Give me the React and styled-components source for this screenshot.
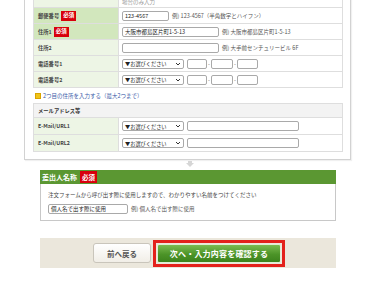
import styled, { createGlobalStyle } from "styled-components";

const Global = createGlobalStyle`
  body {
    margin: 0;
    background: #fff;
    font-family: "Noto Sans CJK JP", "Liberation Sans", sans-serif;
    color: #333;
  }
`

const Page = styled.div`
  width: 380px;
  height: 300px;
  overflow: hidden;
`

const Panel = styled.div`
  margin: -9px 0 0 24px;
  width: 310px;
  padding: 0 7px 7px 8px;
  border: 1px solid #d2d2d2;
  border-top: none;
  box-shadow: 1px 1px 1px rgba(0,0,0,0.06);
`

const Table = styled.div`
  border: 1px solid #dedede;
  border-top: ${(p) => (p.$open ? "none" : "1px solid #dedede")};
  margin-top: ${(p) => p.$gap || 0}px;
`

const Row = styled.div`
  display: flex;
  height: ${(p) => p.$h || 15}px;
  border-bottom: 1px solid #dedede;
  &:last-child { border-bottom: none; }
`

const Label = styled.div`
  width: 85px;
  flex: none;
  display: flex;
  align-items: center;
  gap: 2px;
  padding-left: 4px;
  box-sizing: border-box;
  border-right: 1px solid #dedede;
  background: ${(p) => (p.$req ? "#d2e7bd" : "#edf5e5")};
  font-size: 5.3px;
  font-weight: bold;
  color: #444;
`

const Cell = styled.div`
  flex: 1;
  display: flex;
  align-items: ${(p) => (p.$bottom ? "flex-end" : "center")};
  padding-left: 3px;
  padding-bottom: ${(p) => (p.$bottom ? 2 : 0)}px;
  gap: 3px;
  font-size: 5.5px;
  line-height: ${(p) => (p.$bottom ? "6px" : "normal")};
  color: ${(p) => (p.$muted ? "#999" : "#444")};
`

const Badge = styled.span`
  display: inline-flex;
  align-items: center;
  justify-content: center;
  background: #d8000c;
  color: #fff;
  font-size: ${(p) => p.$size || 5.5}px;
  font-weight: bold;
  height: ${(p) => p.$h || 10}px;
  padding: 0 2px;
  line-height: 1;
`

const Input = styled.div`
  width: ${(p) => p.$w}px;
  height: 8px;
  border: 1px solid #a9a9a9;
  border-radius: 2px;
  background: #fff;
  box-sizing: content-box;
  font-size: 5.5px;
  line-height: 8px;
  padding-left: 2px;
  color: #222;
  white-space: nowrap;
  overflow: hidden;
`

const Select = styled.div`
  width: 56px;
  height: 8px;
  border: 1px solid #a9a9a9;
  border-radius: 2px;
  display: flex;
  align-items: center;
  justify-content: space-between;
  padding: 0 2px;
  font-size: 5.2px;
  color: #222;
  white-space: nowrap;
`

const Dash = styled.span`
  font-size: 5.5px;
  color: #555;
  margin: 0 -2px;
`

const Hint = styled.span`
  font-size: 5.5px;
  color: #555;
  white-space: nowrap;
`

const AddLink = styled.div`
  display: flex;
  align-items: center;
  gap: 2px;
  height: 10px;
  margin-top: 3px;
  padding-left: 2px;
  font-size: 5.5px;
  color: #3a5aa8;
`

const PlusIcon = styled.span`
  width: 4px;
  height: 4px;
  background: #f0c419;
  border: 1px solid #d9a400;
`

const HeadRow = styled.div`
  height: 13px;
  display: flex;
  align-items: center;
  padding-left: 4px;
  background: #f3f3f3;
  border-bottom: 1px solid #dedede;
  font-size: 5.3px;
  font-weight: bold;
`

const Arrow = styled.div`
  display: flex;
  justify-content: center;
  height: 9px;
  padding-top: 1px;
`

const Section = styled.div`
  margin-left: 40px;
  width: 296px;
`

const SectionHead = styled.div`
  height: 14px;
  display: flex;
  align-items: center;
  gap: 3px;
  padding-left: 2px;
  background: #5b9732;
  color: #fff;
  font-size: 7px;
  font-weight: bold;
`

const SectionBody = styled.div`
  border: 1px solid #c8c8c8;
  border-top: none;
  padding: 7px 0 6px 7px;
  font-size: 5.5px;
  color: #444;
`

const InputLine = styled.div`
  display: flex;
  align-items: center;
  gap: 3px;
  margin-top: 5px;
`

const ButtonBar = styled.div`
  margin: 17px 0 0 40px;
  width: 296px;
  height: 30px;
  background: #ebe7dc;
  display: flex;
  align-items: center;
  padding-left: 53px;
  box-sizing: border-box;
  gap: 2px;
`

const BackButton = styled.div`
  width: 58px;
  height: 20px;
  box-sizing: border-box;
  border: 1px solid #c9c5bb;
  border-radius: 3px;
  background: linear-gradient(#ffffff, #f1eee7);
  display: flex;
  align-items: center;
  justify-content: center;
  font-size: 7.5px;
  font-weight: bold;
  color: #555;
`

const Highlight = styled.div`
  border: 3px solid #e3211b;
  padding: 1px;
`

const NextButton = styled.div`
  width: 124px;
  height: 19px;
  box-sizing: border-box;
  border: 1px solid #dfeed4;
  border-radius: 2px;
  background: linear-gradient(#7bbb50, #4c9428 55%, #3c821c);
  display: flex;
  align-items: center;
  justify-content: center;
  font-size: 8px;
  font-weight: bold;
  color: #fff;
  letter-spacing: 0.2px;
`

const Chevron = () => (
  <svg width="6" height="4" viewBox="0 0 6 4">
    <path d="M1 1 L3 3 L5 1" stroke="#333" strokeWidth="1" fill="none" />
  </svg>
)

const TelSelect = () => (
  <Select>
    <span>▼お選びください</span>
    <Chevron />
  </Select>
)

const Tel = () => (
  <>
    <TelSelect />
    <Input $w={16} />
    <Dash>-</Dash>
    <Input $w={18} />
    <Dash>-</Dash>
    <Input $w={17} />
  </>
)

const App = () => {
  return (
    <Page>
      <Global />
      <Panel>
        <Table $open>
          <Row $h={16}>
            <Label />
            <Cell $muted $bottom>場合のみ入力</Cell>
          </Row>
          <Row>
            <Label $req>郵便番号<Badge>必須</Badge></Label>
            <Cell>
              <Input $w={43}>123-4567</Input>
              <Hint>例) 123-4567（半角数字とハイフン）</Hint>
            </Cell>
          </Row>
          <Row>
            <Label $req>住所1<Badge>必須</Badge></Label>
            <Cell>
              <Input $w={93}>大阪市都島区片町1-5-13</Input>
              <Hint>例) 大阪市都島区片町1-5-13</Hint>
            </Cell>
          </Row>
          <Row>
            <Label>住所2</Label>
            <Cell>
              <Input $w={93} />
              <Hint>例) 大手前センチュリービル 6F</Hint>
            </Cell>
          </Row>
          <Row>
            <Label>電話番号1</Label>
            <Cell><Tel /></Cell>
          </Row>
          <Row>
            <Label>電話番号2</Label>
            <Cell><Tel /></Cell>
          </Row>
        </Table>
        <AddLink>
          <PlusIcon />
          2つ目の住所を入力する（最大2つまで）
        </AddLink>
        <Table $gap={2}>
          <HeadRow>メールアドレス等</HeadRow>
          <Row $h={16}>
            <Label>E-Mail/URL1</Label>
            <Cell>
              <TelSelect />
              <Input $w={108} />
            </Cell>
          </Row>
          <Row $h={16}>
            <Label>E-Mail/URL2</Label>
            <Cell>
              <TelSelect />
              <Input $w={108} />
            </Cell>
          </Row>
        </Table>
      </Panel>
      <Arrow>
        <svg width="8" height="6" viewBox="0 0 8 6">
          <path d="M2 0 H6 V2 H8 L4 6 L0 2 H2 Z" fill="#d6d6d6" />
        </svg>
      </Arrow>
      <Section>
        <SectionHead>
          差出人名称<Badge $size={6.5} $h={12}>必須</Badge>
        </SectionHead>
        <SectionBody>
          注文フォームから呼び出す際に使用しますので、わかりやすい名前をつけてください
          <InputLine>
            <Input $w={76}>個人名で出す際に使用</Input>
            <Hint>例) 個人名で出す際に使用</Hint>
          </InputLine>
        </SectionBody>
      </Section>
      <ButtonBar>
        <BackButton>前へ戻る</BackButton>
        <Highlight>
          <NextButton>次へ・入力内容を確認する</NextButton>
        </Highlight>
      </ButtonBar>
    </Page>
  )
}

export default App
